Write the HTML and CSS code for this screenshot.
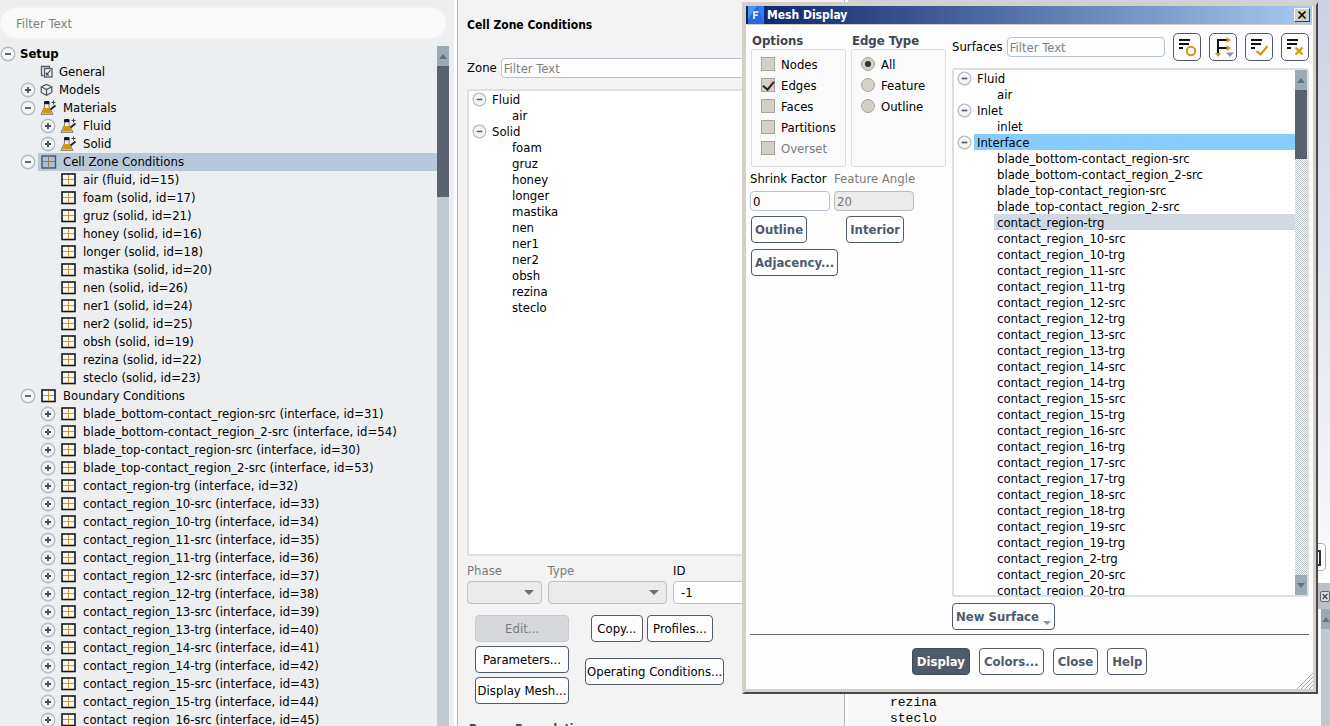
FILE: index.html
```html
<!DOCTYPE html>
<html lang="en">
<head>
<meta charset="utf-8">
<title>Mesh Display</title>
<link rel="stylesheet" href="styles.css">
</head>
<body>
<svg class="defs" aria-hidden="true">
  <symbol id="minus" viewBox="0 0 16 16"><circle cx="8" cy="8" r="6.8" fill="#f4f5f6" stroke="#b4bcc5" stroke-width="1.4"/><path d="M5 8h6" stroke="#555b6b" stroke-width="1.8"/></symbol>
  <symbol id="plus" viewBox="0 0 16 16"><circle cx="8" cy="8" r="6.8" fill="#f0f2f3" stroke="#b4bcc5" stroke-width="1.4"/><path d="M5 8h6M8 5v6" stroke="#4a5060" stroke-width="1.8"/></symbol>
  <symbol id="grid" viewBox="0 0 17 16"><rect x="2" y="2" width="13" height="11.5" fill="#f7f7f5" stroke="#17181c" stroke-width="1.6"/><path d="M8.500 3v10M3 7.500h11" stroke="#d39a1c" stroke-width="1"/></symbol>
  <symbol id="gridsel" viewBox="0 0 17 16"><rect x="2" y="2" width="13.5" height="12" fill="#aebdcf" stroke="#4a5568" stroke-width="1.4"/><path d="M8.500 3v10.500M3 7.500h12" stroke="#8f8146" stroke-width="1"/></symbol>
  <symbol id="flask" viewBox="0 0 17 16"><path d="M4.500 3v4L1 14.300h12L9 7V3z" fill="#f2f2f0" stroke="#777" stroke-width="1"/><path d="M4.300 8h4.900l2.700 5.500H2z" fill="#d3940f"/><rect x="4" y="1" width="5.500" height="3.200" rx="1" fill="#15161a"/><path d="M10.500 9.500L15.500 5.500" stroke="#222" stroke-width="1.800"/><path d="M11.500 2.500h4M13.500.5v4" stroke="#444" stroke-width="1"/></symbol>
  <symbol id="general" viewBox="0 0 13 16"><path d="M3.500 11.500H1.500v-9h8v2" fill="none" stroke="#555b66" stroke-width="1.300"/><rect x="4.500" y="4.500" width="7.500" height="8.500" fill="#eceef0" stroke="#555b66" stroke-width="1.300"/><path d="M10.500 6L6.500 11M6.500 8.500V11H9" fill="none" stroke="#444" stroke-width="1.200"/></symbol>
  <symbol id="models" viewBox="0 0 13 16"><path d="M6.500 2.500l5.300 2.300v5.700l-5.300 2.800-5.300-2.800V4.800zM1.200 4.800l5.300 2.700 5.300-2.700M6.500 7.500v5.800" fill="none" stroke="#4f545d" stroke-width="1.200"/></symbol>
</svg>

<main class="app">
  <section class="outline">
    <input class="search" type="text" placeholder="Filter Text" aria-label="Filter outline">
    <div class="outline-body">
      <ul class="tree" id="outline-tree"></ul>
      <div class="scroll"><span class="scroll-btn up"></span><span class="thumb"></span></div>
    </div>
  </section>

  <section class="task">
    <h1>Cell Zone Conditions</h1>
    <div class="zone-row"><label for="zone">Zone</label><input id="zone" class="field" type="text" placeholder="Filter Text"></div>
    <ul class="list zone-list" id="zone-list"></ul>
    <div class="props">
      <div class="prop phase"><label for="phase">Phase</label><span class="pick"><select id="phase" disabled></select></span></div>
      <div class="prop type"><label for="type">Type</label><span class="pick"><select id="type" disabled></select></span></div>
      <div class="prop id"><label for="zid">ID</label><input id="zid" class="field" type="text" value="-1"></div>
    </div>
    <div class="actions">
      <div class="col">
        <button class="btn" disabled>Edit...</button>
        <button class="btn">Parameters...</button>
        <button class="btn">Display Mesh...</button>
      </div>
      <div class="col right">
        <div class="pair"><button class="btn">Copy...</button><button class="btn">Profiles...</button></div>
        <button class="btn">Operating Conditions...</button>
      </div>
    </div>
    <h2>Porous Formulation</h2>
  </section>

  <section class="work">
    <div class="view"></div>
    <div class="toolbar"><button class="tool" aria-label="Window"></button></div>
    <div class="console-bar"><button class="mini" aria-label="Close console"><svg viewBox="0 0 10 10"><path d="M2 2l6 6M8 2L2 8" stroke="#4b4f56" stroke-width="1.800"/></svg></button></div>
    <div class="console"><pre>rezina
steclo</pre><div class="scroll"><span class="scroll-btn up"></span></div></div>
  </section>
</main>

<section class="dialog" role="dialog" aria-label="Mesh Display">
  <header class="title">
    <svg class="logo" viewBox="0 0 16 18"><rect width="16" height="18" fill="#2a66e0"/><path d="M0 0h9L0 13z" fill="#4b93f5"/><path d="M9 0h7v18z" fill="#2f7bf0"/><path d="M6 13V6h4.500M6 9.300h3.800" fill="none" stroke="#fff" stroke-width="1.600"/></svg>
    <span>Mesh Display</span>
    <button class="close" aria-label="Close window"><svg viewBox="0 0 10 10"><path d="M1.500 1.500l7 7M8.500 1.500l-7 7" stroke="#000" stroke-width="1.700"/></svg></button>
  </header>
  <div class="body">
    <div class="settings">
      <div class="groups">
        <fieldset><legend>Options</legend><div class="box">
          <label><input type="checkbox">Nodes</label>
          <label><input type="checkbox" checked>Edges</label>
          <label><input type="checkbox">Faces</label>
          <label><input type="checkbox">Partitions</label>
          <label class="off"><input type="checkbox" disabled>Overset</label>
        </div></fieldset>
        <fieldset><legend>Edge Type</legend><div class="box">
          <label><input type="radio" name="edge" checked>All</label>
          <label><input type="radio" name="edge">Feature</label>
          <label><input type="radio" name="edge">Outline</label>
        </div></fieldset>
      </div>
      <div class="numbers">
        <div><label for="shrink">Shrink Factor</label><input id="shrink" class="field" type="text" value="0"></div>
        <div><label for="angle" class="off">Feature Angle</label><input id="angle" class="field" type="text" value="20" disabled></div>
      </div>
      <div class="modes"><button class="btn strong">Outline</button><button class="btn strong">Interior</button></div>
      <button class="btn strong adj">Adjacency...</button>
    </div>
    <div class="surfaces">
      <div class="surf-head">
        <label for="surf">Surfaces</label><input id="surf" class="field" type="text" placeholder="Filter Text">
        <button class="icon-btn" aria-label="Toggle"><svg viewBox="1 1 26 26"><path d="M6 7h11M6 11h10M6 15h4" stroke="#111" stroke-width="2"/><circle cx="18" cy="18" r="4.200" fill="none" stroke="#d19612" stroke-width="2"/></svg></button>
        <button class="icon-btn" aria-label="Group"><svg viewBox="1 1 26 26"><path d="M9 20V7h9M9 15h9" fill="none" stroke="#111" stroke-width="2"/><path d="M17.500 4l4.500 3-4.500 3zM17.500 12l4.500 3-4.500 3zM6 20h6l-3 4z" fill="#d19612"/><path d="M17 19.500h8L21 24z" fill="#8b93a0"/></svg></button>
        <button class="icon-btn" aria-label="Select all"><svg viewBox="1 1 26 26"><path d="M6 7h11M6 11h10M6 15h4" stroke="#111" stroke-width="2"/><path d="M11.500 18l4 3.500L22.500 13" fill="none" stroke="#d19612" stroke-width="2"/></svg></button>
        <button class="icon-btn" aria-label="Deselect all"><svg viewBox="1 1 26 26"><path d="M6 7h11M6 11h10M6 15h4" stroke="#111" stroke-width="2"/><path d="M14.500 14.500l7 7M21.500 14.500l-7 7" stroke="#d19612" stroke-width="2.200"/></svg></button>
      </div>
      <div class="surf-box">
        <ul class="list" id="surface-list"></ul>
        <div class="scroll dotted"><span class="scroll-btn up"></span><span class="thumb"></span><span class="space"></span><span class="scroll-btn down"></span></div>
      </div>
      <button class="btn strong new">New Surface<i class="caret"></i></button>
    </div>
  </div>
  <footer class="foot">
    <button class="btn strong primary">Display</button>
    <button class="btn strong">Colors...</button>
    <button class="btn strong">Close</button>
    <button class="btn strong">Help</button>
  </footer>
  <svg class="grip" viewBox="0 0 16 16"><path d="M0 16L16 0M4 16L16 4M8 16L16 8M12 16l4-4" stroke="#a9a9a9" stroke-width="1"/></svg>
</section>
<script src="script.js"></script>
</body>
</html>
```

FILE: styles.css
```css
* { box-sizing: border-box; }
body, ul, h1, h2, pre, fieldset, legend { margin: 0; padding: 0; }
body {
  height: 100vh;
  overflow: hidden;
  position: relative;
  background: #f3f3f3;
  color: #000;
}
body, input, button, select { font: 13px/16px "DejaVu Sans Condensed", "DejaVu Sans", sans-serif; }
ul { list-style: none; }
fieldset { border: 0; min-width: 0; }
.defs { display: none; }

.app { display: grid; grid-template-columns: 457fr 388fr 485fr; height: 100vh; }
.app > section { min-width: 0; min-height: 0; overflow: hidden; }

/* Outline view */
.outline {
  background: #eceef0;
  border-right: 3px solid #fff;
  display: flex;
  flex-direction: column;
  padding: 7px 5px 0 0;
}
.search {
  height: 32px;
  margin-right: 2px;
  border: 1px solid #f2f3f4;
  border-radius: 16px;
  background: #f9f9f9;
  padding: 0 15px;
}
::placeholder { color: #808080; opacity: 1; }
.outline-body { display: flex; flex: 1; min-height: 0; padding-top: 6px; }
.tree { flex: 1; min-width: 0; overflow: hidden; white-space: nowrap; }
.tree li { display: flex; align-items: center; height: 18px; flex: none; }
.tree .exp { width: 16px; height: 16px; flex: none; margin-right: 2px; }
.tree .d0 .cell { font-weight: bold; }
.tree .d1 { padding-left: 20px; }
.tree .d2 { padding-left: 40px; }
.tree .cell { display: flex; align-items: center; flex: 1; height: 18px; padding-left: 2px; }
.tree .ico { width: 17px; height: 16px; margin-right: 6px; }
.tree .small { width: 13px; }
.tree .sel .cell { background: #b8c8d9; }

.scroll { width: 12px; flex: none; display: flex; flex-direction: column; background: #c1c9d0; }
.outline .scroll { margin-top: 1px; }
.scroll-btn { height: 20px; flex: none; background: #9cabb3; display: flex; align-items: center; justify-content: center; }
.scroll-btn::before { content: ""; border: 4px solid transparent; border-top: 0; border-bottom: 5px solid #66717c; }
.scroll-btn.down::before { border-bottom: 0; border-top: 5px solid #66717c; }
.thumb { height: 131px; background: #5c6170; flex: none; }

/* Task page */
.task {
  background: #f3f3f3;
  border-left: 1px solid #b4b4b4;
  border-right: 1px solid #b4b4b4;
  padding: 17px 8px 0 9px;
}
h1, h2 { font: bold 12px/16px "DejaVu Sans Condensed", "DejaVu Sans", sans-serif; }
.field { height: 20px; border: 1px solid #b7c3d2; border-radius: 4px; background: #fdfdfd; padding: 0 2px; min-width: 0; color: #000; }
.field:disabled { background: #ebebeb; border-color: #bcbcbc; color: #7a7a7a; }
.zone-row { display: flex; align-items: center; gap: 4px; margin-top: 25px; }
.zone-row .field { flex: 1; }
.list { white-space: nowrap; overflow: hidden; }
.list li { display: flex; height: 16px; align-items: center; padding-left: 3px; }
.list .exp { width: 15px; height: 15px; flex: none; margin-right: 2px; }
.list .cell { flex: 1; padding-left: 3px; height: 16px; line-height: 17px; }
.list .leaf { padding-left: 40px; }
.zone-list, .surf-box { border: 2px solid #dedede; border-radius: 3px; background: #fff; }
.zone-list { height: 467px; margin-top: 11px; }
.props { display: flex; gap: 6px; margin-top: 7px; }
.prop { display: flex; flex-direction: column; gap: 2px; color: #7a7a7a; }
.prop.phase { width: 75px; }
.prop.type { width: 120px; }
.prop.id { flex: 1; color: #000; }
.prop .field { height: 23px; padding: 0 7px; }
.pick { display: grid; align-items: center; }
.pick select { grid-area: 1 / 1; height: 23px; width: 100%; border: 1px solid #c0c0c0; border-radius: 4px; background: #ebebeb; appearance: none; opacity: 1; }
.pick::after { content: ""; grid-area: 1 / 1; justify-self: end; margin-right: 8px; border: 5px solid transparent; border-top-color: #66707b; border-bottom: 0; }
.btn { height: 27px; border: 1px solid #4f5b6b; border-radius: 4px; background: #fdfdfd; padding: 0 1px; color: #000; white-space: nowrap; }
.btn:disabled { background: #d6d7da; border-color: #c8cacd; color: #7a7a7a; }
.btn.strong { font-weight: bold; color: #4f5b6b; padding: 0 3px; }
.actions { display: flex; gap: 16px; padding: 11px 0 0 8px; }
.actions .col { display: flex; flex-direction: column; gap: 4px; width: 94px; }
.actions .right { width: 139px; gap: 16px; }
.pair { display: flex; gap: 4px; padding: 0 11px 0 6px; }
.pair .btn { flex: 1 1 auto; }
.task h2 { margin: 17px 0 0 2px; color: #3c4654; }

/* Graphics and console */
.work { border-left: 3px solid #fff; display: flex; flex-direction: column; }
.view { flex: 1; background: linear-gradient(#ccd2e2, #f6f7fa); }
.toolbar { height: 40px; background: #fdfdfd; display: flex; justify-content: flex-end; align-items: flex-start; padding-right: 4px; }
.tool { width: 24px; height: 28px; border: 1px solid #a9b0b9; border-radius: 4px; background: #fff; padding: 6px 4px; }
.tool::before { content: ""; display: block; height: 12px; border: 2px solid #333; }
.console-bar { height: 26px; background: #bcc0c7; display: flex; justify-content: flex-end; align-items: center; }
.mini { width: 10px; height: 11px; padding: 0; border: 1px solid #666; border-radius: 2px; background: #ddd; display: flex; }
.console { height: 117px; display: flex; background: #f7f7f7; }
.console pre { flex: 1; padding: 86px 0 0 42px; font: 13px/16px "Liberation Mono", monospace; }
.console .scroll { width: 9px; }

/* Mesh Display window */
.dialog {
  position: absolute;
  left: 742px;
  right: 12px;
  top: 2px;
  bottom: 32px;
  display: flex;
  flex-direction: column;
  background: #fdfdfd;
  border: 3px solid #d4d0c8;
  border-right: 2px solid #484848;
  border-bottom: 2px solid #484848;
  box-shadow: inset -3px -3px #d4d0c8, inset 1px 1px #d4d0c8;
  padding: 1px 4px 3px 1px;
}
.title { display: flex; align-items: center; height: 18px; background: linear-gradient(90deg, #0a246a, #a6caf0); color: #fff; font-size: 12px; font-weight: bold; padding: 0 2px; gap: 3px; flex: none; }
.title span { flex: 1; }
.logo { width: 16px; height: 18px; }
.close { width: 16px; height: 14px; padding: 1px 2px; background: #d4d0c8; border: 1px solid; border-color: #fff #404040 #404040 #fff; display: flex; justify-content: center; }
.close svg { width: 10px; height: 10px; }
.body { display: flex; flex: 1; min-height: 0; gap: 6px; padding: 8px 3px 4px 4px; border-top: 1px solid #d4d0c8; }
.settings { width: 196px; flex: none; }
.groups { display: grid; grid-template-columns: 95px 95px; gap: 5px; padding-left: 1px; }
legend { font-weight: bold; line-height: 15px; padding-bottom: 1px; color: #3c4654; padding-left: 1px; }
.box { height: 118px; border: 1px solid #dedede; border-radius: 2px; background: #fafafa; padding: 4px 9px; }
.box label { display: flex; align-items: center; gap: 6px; height: 21px; }
.off, .box .off { color: #7a7a7a; }
.box input { appearance: none; width: 14px; height: 14px; margin: 0 0 2px; border: 1px solid #a7a49d; background: #d4d0c8; display: grid; place-items: center; flex: none; }
.box input[type=radio] { border-radius: 50%; }
.box input[type=radio]:checked::before { content: ""; width: 6px; height: 6px; border-radius: 50%; background: #333; }
.box input[type=checkbox]:checked::before { content: ""; width: 5px; height: 9px; border: solid #222; border-width: 0 2px 2px 0; transform: rotate(40deg); margin-bottom: 2px; }
.numbers { display: flex; gap: 4px; margin-top: 4px; }
.numbers div { width: 80px; display: flex; flex-direction: column; gap: 4px; white-space: nowrap; }
.modes { display: flex; justify-content: space-between; padding: 5px 42px 0 1px; }
.adj { margin: 6px 0 0 1px; }
.surfaces { flex: 1; min-width: 0; display: flex; flex-direction: column; }
.surf-head { display: flex; align-items: center; gap: 8px; height: 28px; flex: none; }
.surf-head .field { flex: 1; margin-left: -4px; }
.icon-btn { width: 28px; height: 28px; flex: none; border: 1px solid #4f5b6b; border-radius: 5px; padding: 0; background: #fdfdfd; }
.icon-btn svg { width: 26px; height: 26px; display: block; }
.surf-box { flex: 1; min-height: 0; display: flex; margin: 7px 0 6px; }
.surf-box .list { flex: 1; }
.surf-box .open .cell { background: #88cbff; }
.surf-box .picked .cell { background: #d1d8e2; }
.dotted { background: repeating-conic-gradient(#bcc5cc 0 25%, #fff 0 50%) 0 0 / 2px 2px; }
.surf-box .thumb { height: 69px; }
.space { flex: 1; }
.new { align-self: flex-start; display: flex; align-items: center; gap: 4px; }
.caret { border: 4px solid transparent; border-top-color: #8b93a0; border-bottom: 0; margin-top: 12px; }
.foot { display: flex; justify-content: center; gap: 9px; margin: 0 3px 0 4px; padding: 13px 0 14px; border-top: 1px solid #6f6f6f; flex: none; }
.foot .btn { padding: 0 4px; }
.foot .primary { background: #4f5b6b; border-color: #414c5b; color: #fff; }
.grip { position: absolute; right: 3px; bottom: 3px; width: 16px; height: 16px; }
```

FILE: script.js
```js
const icon = (id, cls) => `<svg class="${cls}"><use href="#${id}"/></svg>`;

const cells = [['air', 'fluid', 15], ['foam', 'solid', 17], ['gruz', 'solid', 21], ['honey', 'solid', 16],
  ['longer', 'solid', 18], ['mastika', 'solid', 20], ['nen', 'solid', 26], ['ner1', 'solid', 24],
  ['ner2', 'solid', 25], ['obsh', 'solid', 19], ['rezina', 'solid', 22], ['steclo', 'solid', 23]];
const blades = [['blade_bottom-contact_region-src', 31], ['blade_bottom-contact_region_2-src', 54],
  ['blade_top-contact_region-src', 30], ['blade_top-contact_region_2-src', 53], ['contact_region-trg', 32]];
const contacts = [];
for (let n = 10; n < 20; n++) contacts.push(`contact_region_${n}-src`, `contact_region_${n}-trg`);

// depth, expander, icon, label, extra class
const rows = [
  [0, 'minus', '', 'Setup'],
  [1, '', 'general', 'General'],
  [1, 'plus', 'models', 'Models'],
  [1, 'minus', 'flask', 'Materials'],
  [2, 'plus', 'flask', 'Fluid'],
  [2, 'plus', 'flask', 'Solid'],
  [1, 'minus', 'gridsel', 'Cell Zone Conditions', 'sel'],
  ...cells.map(([n, t, id]) => [2, '', 'grid', `${n} (${t}, id=${id})`]),
  [1, 'minus', 'grid', 'Boundary Conditions'],
  ...blades.map(([n, id]) => [2, 'plus', 'grid', `${n} (interface, id=${id})`]),
  ...contacts.slice(0, 13).map((n, i) => [2, 'plus', 'grid', `${n} (interface, id=${33 + i})`])
];
document.getElementById('outline-tree').innerHTML = rows.map(([d, exp, ic, text, cls = '']) =>
  `<li class="d${d} ${cls}">${exp ? icon(exp, 'exp') : '<span class="exp"></span>'}<span class="cell">` +
  (ic ? icon(ic, /general|models/.test(ic) ? 'ico small' : 'ico') : '') + `${text}</span></li>`).join('');

const head = (t, cls = '') => `<li class="${cls}">${icon('minus', 'exp')}<span class="cell">${t}</span></li>`;
const leaf = (t, cls = '') => `<li class="leaf ${cls}"><span class="cell">${t}</span></li>`;

document.getElementById('zone-list').innerHTML =
  head('Fluid') + leaf('air') + head('Solid') + cells.slice(1).map(c => leaf(c[0])).join('');

document.getElementById('surface-list').innerHTML =
  head('Fluid') + leaf('air') + head('Inlet') + leaf('inlet') + head('Interface', 'open') +
  blades.map(([n]) => leaf(n, n === 'contact_region-trg' ? 'picked' : '')).join('') +
  [...contacts, 'contact_region_2-trg', 'contact_region_20-src', 'contact_region_20-trg'].map(n => leaf(n)).join('');
```
